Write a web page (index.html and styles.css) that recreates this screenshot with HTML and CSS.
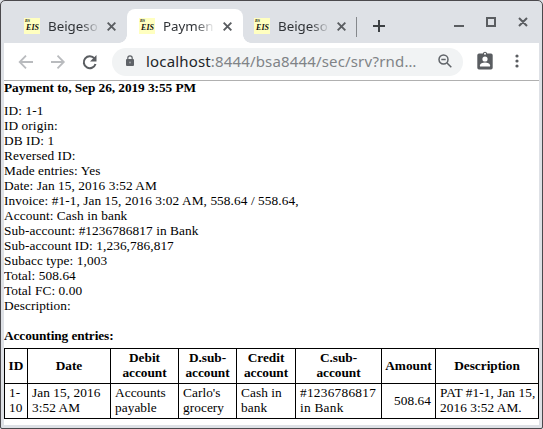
FILE: index.html
```
<!DOCTYPE html>
<html lang="en">
<head>
<meta charset="utf-8">
<title>Payment</title>
<link rel="stylesheet" href="styles.css">
</head>
<body>
<div class="window">
  <header class="tabs">
    <div class="tab first">
      <span class="favicon"><small>BS</small><b>EIS</b></span><span class="label">Beigeso</span>
      <svg class="close" viewBox="0 0 8 8"><path d="M.6.6l6.8 6.8M7.4.6L.6 7.4"/></svg>
    </div>
    <div class="tab active">
      <span class="favicon"><small>BS</small><b>EIS</b></span><span class="label">Paymen</span>
      <svg class="close" viewBox="0 0 8 8"><path d="M.6.6l6.8 6.8M7.4.6L.6 7.4"/></svg>
    </div>
    <div class="tab last">
      <span class="favicon"><small>BS</small><b>EIS</b></span><span class="label">Beigeso</span>
      <svg class="close" viewBox="0 0 8 8"><path d="M.6.6l6.8 6.8M7.4.6L.6 7.4"/></svg>
    </div>
    <i class="divider"></i>
    <svg class="plus" viewBox="0 0 12 12"><path d="M6 0v12M0 6h12"/></svg>
    <svg class="controls" viewBox="0 0 74 12"><path d="M0 10h10M33 2h8v8h-8zM65 2l8 8M73 2l-8 8"/></svg>
  </header>
  <nav class="toolbar">
    <svg class="nav" viewBox="0 0 80 16"><g fill="none" stroke-width="1.8"><path stroke="#b9bbbe" d="M15 8H2M8 1.7L1.7 8 8 14.300M33 8h12.500M39.500 1.700L45.800 8l-6.300 6.300"/><path stroke="#5a5d61" stroke-width="2" d="M76.500 4.500A6 6 0 1 0 77.500 10"/></g><path fill="#5a5d61" d="M78.500 1v6.500H72z"/></svg>
    <div class="address">
      <svg class="lock" viewBox="0 0 8 12"><path fill="#5f6368" d="M1 4h6q1 0 1 1v5q0 1-1 1H1q-1 0-1-1V5q0-1 1-1z"/><path fill="none" stroke="#5f6368" stroke-width="1.200" d="M1.800 4.500V3a2.200 2.200 0 0 1 4.400 0v1.500"/><circle cx="4" cy="7.500" r=".9" fill="#a6a8ab"/></svg>
      <span class="url">localhost<span>:8444/bsa8444/sec/srv?rnd…</span></span>
      <svg class="zoom" viewBox="0 0 14 14"><g fill="none" stroke="#5f6368" stroke-width="1.500"><circle cx="5.500" cy="5.500" r="4.500"/><path d="M9 9l4.300 4.300M3.300 5.500h4.400"/></g></svg>
    </div>
    <svg class="badge" viewBox="0 0 16 19"><path fill="#5a5d61" d="M2 2.500h3.800a2.300 2.300 0 0 1 4.400 0H14q1.700 0 1.700 1.700v12.600q0 1.700-1.700 1.700H2Q.3 18.500.3 16.800V4.200Q.3 2.500 2 2.500z"/><circle cx="8" cy="2.700" r="1" fill="#fff"/><circle cx="8" cy="8" r="2.600" fill="#fff"/><path fill="#fff" d="M3 15.500v-1.300c0-3.600 10-3.600 10 0v1.300z"/></svg>
    <svg class="dots" viewBox="0 0 4 14"><g fill="#5a5d61"><circle cx="2" cy="2" r="1.600"/><circle cx="2" cy="7" r="1.600"/><circle cx="2" cy="12" r="1.600"/></g></svg>
  </nav>
  <main>
    <h1>Payment to, Sep 26, 2019 3:55 PM</h1>
    <div class="details">
      <div>ID: 1-1</div>
      <div>ID origin:</div>
      <div>DB ID: 1</div>
      <div>Reversed ID:</div>
      <div>Made entries: Yes</div>
      <div>Date: Jan 15, 2016 3:52 AM</div>
      <div>Invoice: #1-1, Jan 15, 2016 3:02 AM, 558.64 / 558.64,</div>
      <div>Account: Cash in bank</div>
      <div>Sub-account: #1236786817 in Bank</div>
      <div>Sub-account ID: 1,236,786,817</div>
      <div>Subacc type: 1,003</div>
      <div>Total: 508.64</div>
      <div>Total FC: 0.00</div>
      <div>Description:</div>
    </div>
    <h2>Accounting entries:</h2>
    <table>
      <colgroup><col class="c-id"><col class="c-date"><col class="c-debit"><col class="c-dsub"><col class="c-credit"><col class="c-csub"><col class="c-amount"><col class="c-desc"></colgroup>
      <tr><th>ID</th><th>Date</th><th>Debit<br>account</th><th>D.sub-<br>account</th><th>Credit<br>account</th><th>C.sub-<br>account</th><th>Amount</th><th>Description</th></tr>
      <tr><td>1-<br>10</td><td>Jan 15, 2016<br>3:52 AM</td><td>Accounts<br>payable</td><td>Carlo's<br>grocery</td><td>Cash in<br>bank</td><td class="wide">#1236786817<br>in Bank</td><td class="num">508.64</td><td>PAT #1-1, Jan 15,<br>2016 3:52 AM.</td></tr>
    </table>
  </main>
</div>
</body>
</html>
```
FILE: styles.css
```
* { box-sizing: border-box; }
html { background: #dee1e6; }
body { margin: 0; }
svg { display: block; flex: none; }
.window {
  width: 543px; height: 429px;
  border: 1px solid #4b494d;
  border-radius: 5px 5px 2px 2px;
  background: #dee1e6;
  padding: 0 3px 3px;
  overflow: hidden;
}
.tabs { height: 42px; display: flex; align-items: flex-start; }
.tab {
  height: 34px; margin-top: 8px; padding: 0 11px 0 20px;
  display: flex; align-items: center;
  font: 13.33px/18px "Noto Sans", sans-serif; color: #303337;
}
.first { width: 123px; }
.active {
  position: relative; width: 116px; padding: 0 11px 0 12px;
  background: #fff; border-radius: 8px 8px 0 0; color: #303337;
}
.active::before, .active::after {
  content: ""; position: absolute; bottom: 0; width: 8px; height: 8px;
}
.active::before { left: -8px; background: radial-gradient(circle at 0 0, transparent 7.5px, #fff 8px); }
.active::after { right: -8px; background: radial-gradient(circle at 100% 0, transparent 7.5px, #fff 8px); }
.last { width: 113px; padding: 0 10px 0 11px; }
.favicon {
  width: 16px; height: 16px; flex: none; background: #ffffc0; color: #111;
  font-family: "Liberation Serif", serif; font-style: italic;
  display: flex; flex-direction: column;
}
.favicon small { font-size: 4px; line-height: 5px; padding-left: 1px; font-weight: bold; }
.favicon b { font-size: 8px; line-height: 9px; text-align: center; padding-left: 1px; }
.label {
  width: 52px; margin: -1px 0 0 8px; white-space: nowrap;
  -webkit-mask-image: linear-gradient(90deg, #000 62%, transparent);
  mask-image: linear-gradient(90deg, #000 62%, transparent);
}
.close { width: 9px; height: 9px; margin-left: auto; fill: none; stroke: #5a5d61; stroke-width: 1.7; }
.divider { width: 1px; height: 20px; margin: 16px 0 0 0; background: #85888c; }
.plus { width: 12px; height: 12px; margin: 19px 0 0 16px; fill: none; stroke: #3c4043; stroke-width: 2; }
.controls { width: 74px; height: 12px; margin: 15px 0 0 69px; fill: none; stroke: #5a5d61; stroke-width: 2; }
.toolbar {
  height: 38px; background: #fff; border-bottom: 1px solid #b0b0b0;
  display: flex; align-items: center; padding-left: 14px;
}
.nav { width: 80px; height: 16px; }
.address {
  width: 351px; height: 28px; margin-left: 14px; padding: 0 11px 0 14px;
  border-radius: 14px; background: #f1f3f4; display: flex; align-items: center;
}
.lock { width: 8px; height: 12px; margin-top: -2px; }
.url { margin-left: 12px; font: 15px/18px "Noto Sans", sans-serif; letter-spacing: 0.16px; margin-top: -2px; color: #222529; white-space: nowrap; }
.url span { color: #808387; }
.zoom { width: 14px; height: 14px; margin: -1px 0 0 auto; }
.badge { width: 16px; height: 19px; margin: -2px 0 0 14px; }
.dots { width: 4px; height: 14px; margin: -1px 0 0 22px; }
main {
  height: 344px; background: #fff; overflow: hidden;
  font: 13.33px/15px "Liberation Serif", serif; color: #000;
}
h1, h2 { margin: 0; font-size: 13.33px; line-height: 15px; letter-spacing: -0.06px; }
h1 { margin-top: -1px; }
.details { margin-top: 8px; letter-spacing: 0.075px; }
h2 { margin-top: 15px; letter-spacing: -0.1px; }
table { width: 535px; margin-top: 5px; table-layout: fixed; border-collapse: collapse; }
th, td { height: 35px; border: 1px solid #000; padding: 0 4px 2px; text-align: left; white-space: nowrap; }
td { letter-spacing: 0.05px; }
th { text-align: center; padding: 0 0 2px; letter-spacing: -0.03px; }
td.wide { letter-spacing: 0.25px; }
td.num { text-align: right; }
.c-id { width: 23px; }
.c-date { width: 83px; }
.c-debit { width: 68px; }
.c-dsub { width: 58px; }
.c-credit { width: 59px; }
.c-csub { width: 86px; }
.c-amount { width: 54px; }
.c-desc { width: 103px; }
```
